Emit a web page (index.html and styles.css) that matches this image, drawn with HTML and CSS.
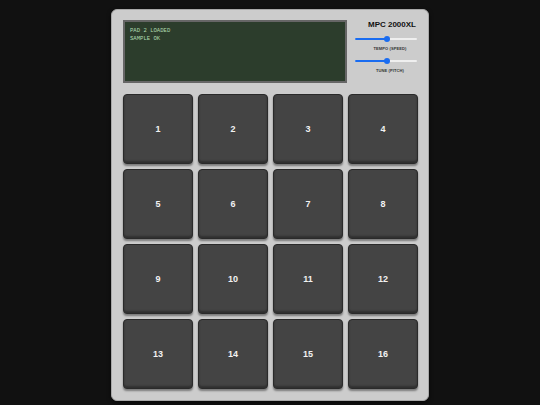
FILE: index.html
```html
<!DOCTYPE html>
<html>
<head>
<meta charset="utf-8">
<link rel="stylesheet" href="styles.css">
</head>
<body>
<div class="device">
  <div class="header">
    <div class="screen">
      <div class="line">PAD 2 LOADED</div>
      <div class="line">SAMPLE OK</div>
    </div>
    <div class="controls">
      <div class="title">MPC 2000XL</div>
      <div class="control tempo">
        <div class="slider"><div class="fill"></div><div class="thumb"></div></div>
        <div class="label">TEMPO (SPEED)</div>
      </div>
      <div class="control tune">
        <div class="slider"><div class="fill"></div><div class="thumb"></div></div>
        <div class="label">TUNE (PITCH)</div>
      </div>
    </div>
  </div>
  <div class="pads">
    <div class="pad">1</div><div class="pad">2</div><div class="pad">3</div><div class="pad">4</div>
    <div class="pad">5</div><div class="pad">6</div><div class="pad">7</div><div class="pad">8</div>
    <div class="pad">9</div><div class="pad">10</div><div class="pad">11</div><div class="pad">12</div>
    <div class="pad">13</div><div class="pad">14</div><div class="pad">15</div><div class="pad">16</div>
  </div>
</div>
</body>
</html>
```
FILE: styles.css
```css
html, body {
  margin: 0;
  padding: 0;
}
body {
  background: #111111;
  width: 540px;
  height: 405px;
  font-family: "Liberation Sans", Arial, sans-serif;
  padding-top: 9px;
  box-sizing: border-box;
}
.device {
  width: 318px;
  height: 392px;
  margin: 0 auto;
  box-sizing: border-box;
  background: #cccccc;
  border: 1px solid #a8a8a8;
  border-radius: 6px;
  padding: 10px 11px 11px 11px;
  box-shadow: 0 2px 4px rgba(0,0,0,0.6);
}
.header {
  display: flex;
  height: 63px;
  gap: 8px;
}
.screen {
  width: 225px;
  height: 63px;
  box-sizing: border-box;
  background: #2c3d2c;
  border: 2px solid #666666;
  padding: 5px 5px;
  font-family: "Liberation Mono", "DejaVu Sans Mono", monospace;
  font-size: 5.6px;
  line-height: 7.7px;
  color: #b0dcb0;
}
.controls {
  flex: 1;
  display: flex;
  flex-direction: column;
  align-items: stretch;
}
.title {
  font-weight: bold;
  font-size: 8px;
  line-height: 9px;
  text-align: right;
  color: #111111;
  padding-right: 1px;
  margin-top: 0px;
}
.control {
  display: flex;
  flex-direction: column;
  align-items: center;
}
.tempo {
  margin-top: 7px;
}
.tune {
  margin-top: 7px;
}
.slider {
  position: relative;
  width: 62px;
  height: 6px;
  align-self: flex-end;
}
.slider::before {
  content: "";
  position: absolute;
  left: 0;
  right: 0;
  top: 2px;
  height: 2px;
  border-radius: 1px;
  background: #efefef;
}
.fill {
  position: absolute;
  left: 0;
  width: 32px;
  top: 2px;
  height: 2px;
  border-radius: 1px;
  background: #1a6cf0;
}
.thumb {
  position: absolute;
  left: 29px;
  top: 0;
  width: 6px;
  height: 6px;
  border-radius: 50%;
  background: #1a6cf0;
}
.label {
  font-size: 4px;
  line-height: 5px;
  font-weight: bold;
  color: #333333;
  margin-top: 4px;
  margin-left: 8px;
  letter-spacing: 0.1px;
}
.pads {
  margin-top: 11px;
  display: grid;
  grid-template-columns: repeat(4, 70px);
  grid-auto-rows: 70px;
  gap: 5px;
}
.pad {
  background: #444444;
  border: 1px solid #2a2a2a;
  border-radius: 4px;
  box-sizing: border-box;
  box-shadow: 0 2px 2px rgba(0,0,0,0.4), inset 0 -2px 2px rgba(0,0,0,0.3);
  display: flex;
  align-items: center;
  justify-content: center;
  color: #f2f2f2;
  font-weight: bold;
  font-size: 9px;
}
```
